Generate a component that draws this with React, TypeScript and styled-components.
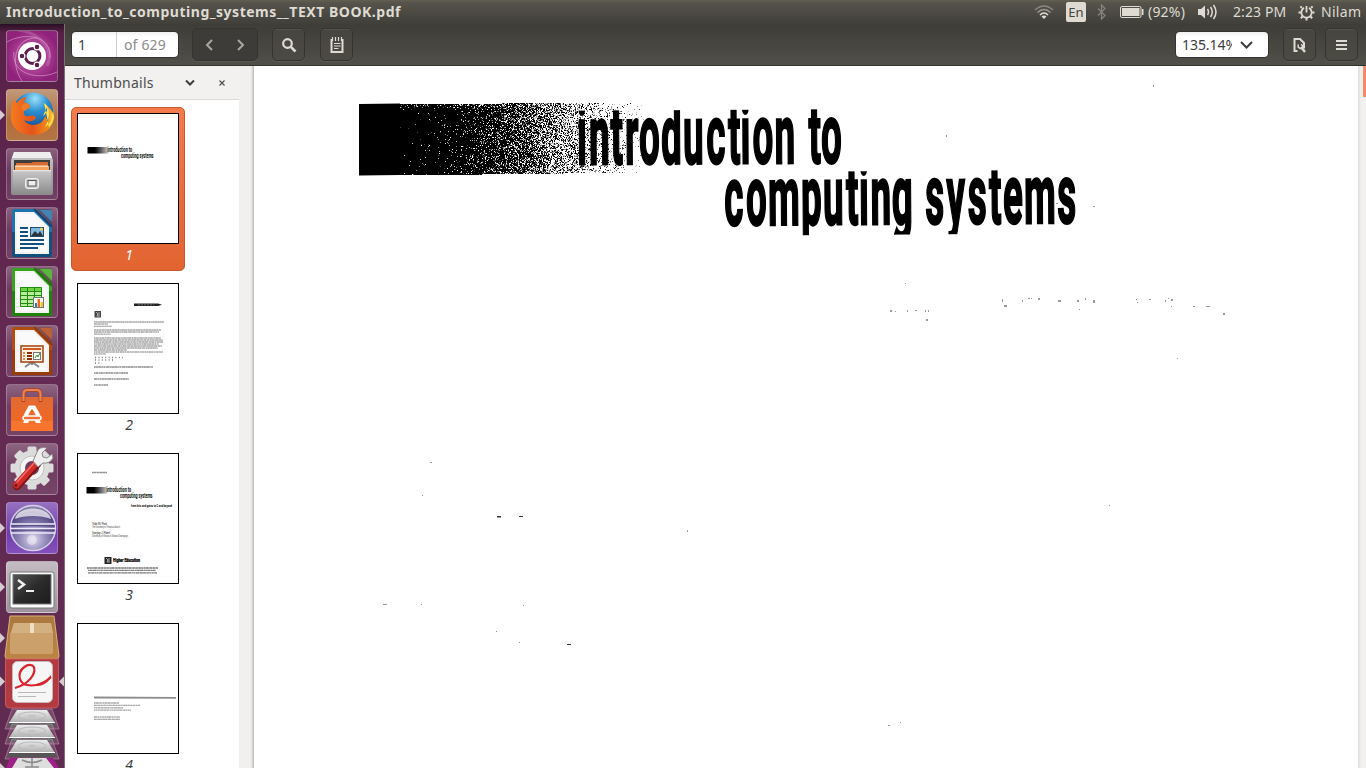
import React from "react";
import styled, { createGlobalStyle, css } from "styled-components";

const GlobalStyle = createGlobalStyle`
  * { box-sizing: border-box; }
  body {
    margin: 0;
    overflow: hidden;
    font-family: "Noto Sans", "Open Sans", sans-serif;
    background: #fff;
  }
  svg { display: block; flex: none; }
`;

/* ---------- Layout ---------- */

const Screen = styled.div`
  width: 1366px;
  height: 768px;
  display: flex;
  flex-direction: column;
  overflow: hidden;
`;

const MenuBar = styled.header`
  height: 24px;
  flex: none;
  display: flex;
  align-items: center;
  justify-content: space-between;
  padding-left: 6px;
  background: linear-gradient(#625f52 0, #55534b 3px, #403f3a 100%);
  color: #dfdbd2;
`;

const WindowTitle = styled.h1`
  margin: 0;
  font-size: 14px;
  line-height: 24px;
  font-weight: 700;
  letter-spacing: 0.52px;
  white-space: nowrap;
`;

const Indicators = styled.div`
  width: 332px;
  height: 24px;
  display: flex;
  align-items: center;
`;

const Indicator = styled.div<{ $w: number; $gap?: number; $ls?: number }>`
  width: ${(p) => p.$w}px;
  margin-right: ${(p) => p.$gap ?? 0}px;
  flex: none;
  font-size: 14px;
  line-height: 24px;
  letter-spacing: ${(p) => p.$ls ?? 0}px;
  white-space: nowrap;
`;

const KeyboardBadge = styled.div`
  width: 20px;
  height: 20px;
  margin-right: 11px;
  border-radius: 2px;
  background: #dfdbd2;
  color: #45443f;
  font-size: 13px;
  line-height: 21px;
  text-align: center;
`;

const Workspace = styled.div`
  flex: 1;
  min-height: 0;
  display: flex;
`;

const Launcher = styled.nav`
  width: 65px;
  flex: none;
  overflow: hidden;
  display: flex;
  flex-direction: column;
  padding-top: 6px;
  border-right: 1px solid #7f6d78;
  background: linear-gradient(#2b0f24 0, #592149 9px, #642a53 45%, #602b50 100%);
`;

const Slot = styled.div<{ $running?: boolean }>`
  height: 52px;
  margin-bottom: 7px;
  flex: none;
  display: flex;
  align-items: center;
  &::before {
    content: "";
    width: 0;
    margin-right: ${(p) => (p.$running ? 1 : 6)}px;
    border: ${(p) => (p.$running ? "5px solid transparent" : "0")};
    border-left-color: #d5cdd2;
    border-right-width: 0;
  }
`;

const Tile = styled.div<{ $bg?: string }>`
  width: 52px;
  height: 52px;
  border-radius: 4px;
  overflow: hidden;
  border: 1px solid rgba(255, 255, 255, 0.24);
  background: ${(p) =>
    p.$bg ?? "linear-gradient(rgba(255,255,255,.28), rgba(255,255,255,.09) 45%, rgba(255,255,255,.12))"};
  svg { margin: -1px; }
`;

const AppWindow = styled.main`
  flex: 1;
  min-width: 0;
  display: flex;
  flex-direction: column;
`;

const Toolbar = styled.div`
  height: 42px;
  flex: none;
  display: flex;
  align-items: center;
  padding: 0 8px 0 7px;
  border-bottom: 1px solid #34332f;
  background: linear-gradient(#3e3d38, #504f48);
`;

const fieldSkin = css`
  border-radius: 4px;
  background: linear-gradient(#f1f1f1, #fff 5px);
  box-shadow: 0 0 0 1px #34332f;
  color: #3c3c3c;
  font-size: 14px;
`;

const PageField = styled.div`
  ${fieldSkin}
  width: 106px;
  height: 25px;
  display: flex;
  line-height: 25px;
`;

const PageNumber = styled.span`
  width: 45px;
  padding-left: 6px;
  border-right: 1px solid #cfcdca;
`;

const PageTotal = styled.span`
  padding-left: 7px;
  color: #8b8b8b;
  letter-spacing: 0.15px;
  white-space: nowrap;
`;

const ZoomField = styled.div`
  ${fieldSkin}
  width: 92px;
  height: 25px;
  margin-left: auto;
  display: flex;
  align-items: center;
`;

const ZoomText = styled.span`
  width: 50px;
  margin: 0 8px 0 6px;
  overflow: hidden;
  flex: none;
  line-height: 25px;
  letter-spacing: -0.05px;
`;

const ToolButton = styled.button<{ $ml: number; $w?: number }>`
  width: ${(p) => p.$w ?? 33}px;
  height: 33px;
  margin: 0 0 0 ${(p) => p.$ml}px;
  padding: 0;
  flex: none;
  display: flex;
  align-items: center;
  justify-content: center;
  gap: 22px;
  border: 1px solid #35342f;
  border-radius: 5px;
  background: ${(p) => (p.$w ? "#3d3c38" : "linear-gradient(#46453f, #4b4a43)")};
  box-shadow: 0 1px 0 #5b5a52, inset 0 1px 0 ${(p) => (p.$w ? "#3d3c38" : "#55544c")};
`;

const Content = styled.div`
  flex: 1;
  min-height: 0;
  display: flex;
`;

const Sidebar = styled.aside`
  width: 174px;
  flex: none;
  display: flex;
  flex-direction: column;
  background: #fff;
`;

const SidebarHeader = styled.div`
  height: 34px;
  flex: none;
  display: flex;
  align-items: center;
  padding-left: 9px;
  border-bottom: 1px solid #dcdad8;
  background: #f2f1f0;
  color: #4c4c4c;
  font-size: 14px;
`;

const SidebarTitle = styled.span`
  width: 111px;
  letter-spacing: 0.25px;
`;

const CloseSlot = styled.span`
  margin-left: 24px;
`;

const ThumbList = styled.div`
  flex: 1;
  min-height: 0;
  overflow: hidden;
  padding: 7px 0 0 6px;
  display: flex;
  flex-direction: column;
  gap: 6px;
`;

const Thumb = styled.figure<{ $selected?: boolean }>`
  width: 114px;
  height: 164px;
  margin: 0;
  padding: 5px;
  flex: none;
  border-radius: 5px;
  border: 1px solid ${(p) => (p.$selected ? "#c9562c" : "transparent")};
  background: ${(p) => (p.$selected ? "linear-gradient(#f37b4c, #e8693a 70%, #e26531)" : "none")};
  color: ${(p) => (p.$selected ? "#fff" : "#3c3c3c")};
`;

const Sheet = styled.div`
  width: 102px;
  height: 131px;
  border: 1px solid #000;
  background: #fff;
`;

const ThumbLabel = styled.figcaption`
  padding-left: 2px;
  font-size: 14px;
  font-style: italic;
  line-height: 22px;
  text-align: center;
`;

const Splitter = styled.div`
  width: 15px;
  flex: none;
  background: linear-gradient(90deg, #f1f0ef 11px, #e3e2e1 13px, #b5b4b3 15px);
`;

const Viewer = styled.section`
  width: 1104px;
  flex: none;
`;

const Scrollbar = styled.div`
  flex: 1;
  padding-left: 5px;
  background: linear-gradient(90deg, #dedddc, #f1f0ef 3px);
`;

const ScrollThumb = styled.div`
  height: 31px;
  background: #f48d66;
`;

/* ---------- Scanned page artwork ---------- */

function seeded(seed: number) {
  let s = seed;
  return () => {
    s = (s + 0x6d2b79f5) | 0;
    let t = Math.imul(s ^ (s >>> 15), 1 | s);
    t = (t + Math.imul(t ^ (t >>> 7), 61 | t)) ^ t;
    return ((t ^ (t >>> 14)) >>> 0) / 4294967296;
  };
}

const STOPS: [number, number][] = [
  [359, 1], [400, 0.999], [425, 0.985], [460, 0.95], [490, 0.87], [515, 0.76],
  [540, 0.6], [565, 0.42], [590, 0.26], [610, 0.14], [630, 0.05], [645, 0],
];

function density(x: number) {
  for (let i = 1; i < STOPS.length; i++) {
    const [x1, d1] = STOPS[i];
    const [x0, d0] = STOPS[i - 1];
    if (x <= x1) return d0 + ((d1 - d0) * (x - x0)) / (x1 - x0);
  }
  return 0;
}

function buildGrain() {
  const rnd = seeded(77);
  const layers = ["", "", "", ""];
  for (let y = 102; y < 176; y++) {
    for (let x = 400; x < 645; x++) {
      const r = rnd();
      const t = (x - 359) / 286;
      const top = 104 - 2 * t;
      const bottom = 175.5 - 3.5 * t;
      if (y < top || y > bottom) continue;
      const d = density(x) * (y < top + 4 ? 0.92 : 1);
      const black = Math.pow(d, 1.7);
      const white = Math.pow(1 - d, 1.5);
      if (r > 1 - white) continue;
      const gray = r <= black ? 0 : 1 + Math.min(2, Math.floor(((r - black) / (1 - white - black)) * 3));
      layers[gray] += `M${x} ${y}h1v1h-1z`;
    }
  }
  return layers;
}

const GRAIN = buildGrain();
const GRAIN_FILLS = ["#000", "#444", "#888", "#c4c4c4"];

const LINE_1 = [582, 599.5, 617, 632, 649.5, 671.5, 693.5, 716, 734.5, 745.5, 763, 785, 797, 815, 831.5];
const LINE_2 = [734, 756.5, 784, 811.5, 833.5, 852.5, 864, 881, 902.5, 918, 935, 956, 977.5, 995.5, 1013, 1040, 1067];
const SQUEEZE = 0.44;

const squeezed = (xs: number[]) => xs.map((x) => (x / SQUEEZE).toFixed(1)).join(" ");

// x, y, width, height of the scanner specks
const SPECKS = [
  [1153, 85, 1, 2], [946, 135, 1, 2], [1093, 206, 2, 1], [1056, 203, 2, 1], [905, 283, 1, 1],
  [1002, 299, 1, 3], [1004, 305, 3, 2], [1022, 300, 1, 2], [1028, 298, 2, 1], [1031, 298, 1, 1],
  [1038, 298, 2, 2], [1058, 300, 3, 2], [1077, 300, 2, 2], [1085, 298, 1, 2], [1093, 300, 2, 3],
  [1079, 309, 1, 1], [1136, 299, 1, 1], [1137, 302, 1, 1], [1149, 299, 2, 1], [1165, 300, 1, 2],
  [1168, 298, 1, 1], [1171, 299, 2, 2], [1171, 306, 1, 1], [1193, 306, 2, 1], [1206, 306, 4, 1],
  [1223, 313, 2, 2], [890, 310, 2, 2], [895, 311, 1, 1], [907, 310, 1, 2], [915, 310, 2, 1],
  [925, 310, 1, 2], [928, 310, 1, 2], [926, 319, 2, 2], [1177, 358, 1, 1], [430, 462, 2, 1],
  [422, 495, 1, 1], [1109, 505, 1, 1], [687, 530, 1, 2], [383, 604, 4, 1], [421, 604, 1, 1],
  [523, 605, 1, 1], [496, 631, 1, 1], [519, 642, 1, 1], [888, 725, 2, 1], [900, 722, 1, 1],
];

function DocumentPage() {
  return (
    <svg width="1104" height="702" viewBox="254 66 1104 702">
      <defs>
        <clipPath id="line1"><rect x="560" y="110" width="300" height="62" /></clipPath>
        <clipPath id="line2"><rect x="700" y="171" width="400" height="63.5" /></clipPath>
      </defs>
      <path d="M359 104L400 103.6V175L359 175.5z" />
      <g shapeRendering="crispEdges">
        {GRAIN.map((d, i) => (
          <path key={i} d={d} fill={GRAIN_FILLS[i]} />
        ))}
      </g>
      <g fontFamily="Roboto, sans-serif" fontWeight="700" fontSize="83" textAnchor="middle" stroke="#000" strokeWidth="2.4">
        <g transform="rotate(-0.3 710 164)">
          <g clipPath="url(#line1)">
            <text transform={`translate(0 163.5) scale(${SQUEEZE} 1)`} x={squeezed(LINE_1)}>introduction to</text>
          </g>
        </g>
        <g transform="rotate(-0.4 900 224)">
          <g clipPath="url(#line2)">
            <text transform={`translate(0 224) scale(${SQUEEZE} 1)`} x={squeezed(LINE_2)}>computing systems</text>
          </g>
        </g>
      </g>
      <g fill="#999">
        {SPECKS.map(([x, y, w, h]) => (
          <rect key={`${x}-${y}`} x={x} y={y} width={w} height={h} />
        ))}
      </g>
      <path d="M497 516h4v1.500h-4zM519 516h4v1h-4zM567 644h4v1h-4z" fill="#333" />
    </svg>
  );
}

/* ---------- Thumbnails ---------- */

function MiniTitle({ x, y }: { x: number; y: number }) {
  return (
    <g transform={`translate(${x} ${y})`}>
      <rect width="21" height="6.5" fill="url(#miniFade)" />
      <g fontFamily="Roboto, sans-serif" fontWeight="700" fontSize="7.4">
        <text transform="translate(20 5.4) scale(.5 1)" textLength="49" lengthAdjust="spacingAndGlyphs">introduction to</text>
        <text transform="translate(33.5 10.900) scale(.5 1)" textLength="65" lengthAdjust="spacingAndGlyphs">computing systems</text>
      </g>
    </g>
  );
}

const dash = (seed: number) => {
  const rnd = seeded(Math.round(seed * 991));
  return Array.from({ length: 12 }, (_, i) => (i % 2 ? 0.5 + rnd() * 0.7 : 0.8 + rnd() * 2.2).toFixed(1)).join(" ");
};

function Rows({ rows, color = "#777" }: { rows: number[][]; color?: string }) {
  return (
    <g stroke={color} strokeWidth="1.3">
      {rows.map(([x, y, w], i) => (
        <React.Fragment key={i}>
          <path d={`M${x} ${y}h${w}`} strokeOpacity=".35" />
          <path d={`M${x} ${y}h${w}`} strokeOpacity=".45" strokeDasharray={dash(i + y)} />
        </React.Fragment>
      ))}
    </g>
  );
}

const Mini = ({ children }: { children: React.ReactNode }) => (
  <svg width="100" height="129" viewBox="0 0 100 129">
    <defs>
      <linearGradient id="miniFade">
        <stop offset=".35" stopColor="#000" />
        <stop offset="1" stopColor="#000" stopOpacity=".2" />
      </linearGradient>
    </defs>
    {children}
  </svg>
);

const PageOne = () => (
  <Mini><MiniTitle x={9.5} y={33} /></Mini>
);

const PageTwo = () => (
  <Mini>
    <path d="M56 19.500h24l4 1.300-4 1.300H56z" fill="#222" />
    <path d="M60 20.800h16" stroke="#888" strokeWidth=".7" strokeDasharray="2 1" />
    <rect x="16.500" y="27" width="6.500" height="6.500" fill="#444" />
    <path d="M18 28l2 2-1 2h3M21 28v3" stroke="#ccc" fill="none" strokeWidth=".8" />
    <Rows
      rows={[
        [16, 38, 70], [16, 40, 14], [16, 42.3, 18],
        [16, 46, 67], [16, 48, 65], [16, 50.2, 17],
        [16, 54, 67], [16, 56, 69], [16, 58, 69], [16, 60, 65], [16, 62, 68], [16, 64, 64], [16, 66, 33], [16, 68, 69], [16, 70, 12],
      ]}
    />
    <path d="M17 73.500h28M17 76h20M17 79h7" stroke="#777" strokeWidth="1.300" strokeDasharray="1 2.400" />
    <Rows rows={[[16, 83, 59], [16, 89, 34], [16, 95, 35], [16, 101, 14]]} color="#555" />
  </Mini>
);

const PageThree = () => (
  <Mini>
    <Rows rows={[[14, 18.5, 15]]} color="#555" />
    <MiniTitle x={8.5} y={33} />
    <g fontFamily="Roboto, sans-serif">
      <text x="53" y="53" fontSize="4" fontWeight="700" textLength="41" lengthAdjust="spacingAndGlyphs">from bits and gates to C and beyond</text>
      <g fill="#444">
        <text x="14" y="70.500" fontSize="3.600" textLength="15">Yale N. Patt</text>
        <text x="14" y="73.500" fontSize="2.600" textLength="28" lengthAdjust="spacingAndGlyphs">The University of Texas at Austin</text>
        <text x="14" y="80" fontSize="3.600" textLength="18">Sanjay J. Patel</text>
        <text x="14" y="83" fontSize="2.600" textLength="36" lengthAdjust="spacingAndGlyphs">University of Illinois at Urbana-Champaign</text>
      </g>
      <rect x="26.500" y="103" width="7" height="7" fill="#222" />
      <path d="M28 104l2 2-1 2h3M31 104v3" stroke="#ddd" fill="none" strokeWidth=".8" />
      <text x="35" y="108" fontSize="4.600" fontWeight="900" stroke="#000" strokeWidth=".2" textLength="27" lengthAdjust="spacingAndGlyphs">Higher Education</text>
    </g>
    <Rows rows={[[9, 114, 71], [10, 116.4, 68], [10, 118.8, 69]]} color="#333" />
  </Mini>
);

const PageFour = () => (
  <Mini>
    <path d="M16 73.500l82 .3" stroke="#8d8d8d" strokeWidth="1.800" />
    <Rows rows={[[16, 79, 25], [16, 81.3, 46], [16, 83.8, 29], [16, 86.2, 37], [16, 93, 26], [16, 95.3, 26]]} />
  </Mini>
);

/* ---------- Launcher icons ---------- */

const Icon52 = ({ children, h = 52 }: { children: React.ReactNode; h?: number }) => (
  <svg width="52" height={h} viewBox={`0 0 52 ${h}`}>{children}</svg>
);

const DashIcon = () => (
  <Icon52>
    <defs>
      <radialGradient id="dashBg"><stop offset=".2" stopColor="#c25aa8" /><stop offset="1" stopColor="#90227b" /></radialGradient>
    </defs>
    <rect width="52" height="52" fill="url(#dashBg)" />
    <g fill="none" stroke="#e5b5da" strokeOpacity=".55">
      <path d="M1 12C18 2 46 5 44 28M51 42C35 50 5 46 8 22M16 51C3 31 10 7 31 8" />
      <path d="M12 0C30 2 50 17 41 36" strokeOpacity=".25" strokeWidth="3" />
    </g>
    <circle cx="26" cy="26" r="14" fill="#fff" />
    <circle cx="26.5" cy="26" r="7.400" fill="none" stroke="#5d1e4d" strokeWidth="3" />
    <g fill="#5d1e4d" stroke="#fff" strokeWidth="1.200">
      <circle cx="16" cy="26" r="2.900" /><circle cx="31" cy="17" r="2.900" /><circle cx="31" cy="35" r="2.900" />
    </g>
  </Icon52>
);

const FirefoxIcon = () => (
  <Icon52>
    <defs>
      <radialGradient id="globe" cx=".55" cy=".15" r=".8"><stop stopColor="#9be0fa" /><stop offset=".4" stopColor="#2c8fd0" /><stop offset="1" stopColor="#143f87" /></radialGradient>
      <linearGradient id="fox" x1="0" x2="1"><stop stopColor="#f47b20" /><stop offset=".5" stopColor="#e5531b" /><stop offset=".85" stopColor="#f08a1d" /><stop offset="1" stopColor="#fce34a" /></linearGradient>
    </defs>
    <circle cx="27" cy="24" r="20.500" fill="url(#globe)" />
    <path d="M7 10L11 14C13 11 17 8 21 8C19 10 18 12 19 14C23 14 25 17 23 19L18 22C17 26 20 28 23 27C26 26 29 26 30 29C27 34 21 32 18 31C23 39 37 37 39 27C41 30 42 32 41 34C44 28 42 20 38 15C45 18 48 25 48 29C46 40 37 47 26 46C12 46 3 37 5 23C5 18 7 14 7 10Z" fill="url(#fox)" />
    <path d="M38 14C46 19 43 32 39 38C46 34 49 25 46 15C48 21 49 32 43 38M37 27C40 25 42 21 41 18" fill="#ffe44f" />
    <path d="M19 14C23 14 25 17 23 19L18 22C14 21 14 16 19 14Z" fill="#ef7d26" />
  </Icon52>
);

const FilesIcon = () => (
  <Icon52>
    <defs>
      <linearGradient id="cab" x2="0" y2="1"><stop stopColor="#c9c9c9" /><stop offset="1" stopColor="#8c8c8c" /></linearGradient>
    </defs>
    <path d="M8 4h36l3 8v33q0 2-2 2H7q-2 0-2-2V12z" fill="url(#cab)" />
    <path d="M8 4h36l2 6H6z" fill="#eee" />
    <path d="M8 12h36v12H8z" fill="#3f3e3e" />
    <path d="M10 15h15l2-1h15v9H10z" fill="#d66c2f" />
    <path d="M9 18h34v5H9z" fill="#f7a35c" /><path d="M9 17.500h33v1.300H9z" fill="#fde6c8" />
    <path d="M7 22h38v24H7z" fill="url(#cab)" /><path d="M7 22h38v1.300H7z" fill="#e6e6e6" />
    <rect x="19.500" y="30.500" width="13" height="10" rx="2" fill="#ccc" stroke="#eee" />
    <rect x="22" y="32.500" width="8" height="5.500" fill="#eee" stroke="#555" />
  </Icon52>
);

function OfficeIcon({ dark, mid, light, children }: { dark: string; mid: string; light: string; children: React.ReactNode }) {
  return (
    <Icon52>
      <path d="M8 2h21l17 17v29q0 2-2 2H8q-2 0-2-2V4q0-2 2-2z" fill={mid} />
      <path d="M6 25h40v23q0 2-2 2H8q-2 0-2-2z" fill={dark} fillOpacity=".65" />
      <path d="M29 2h15q2 0 2 2v15z" fill={dark} fillOpacity=".35" />
      <path d="M28 2l18 18" stroke={dark} strokeWidth="1.500" />
      <path d="M34 3h10q2 0 2 2v10z" fill={light} fillOpacity=".85" />
      <path d="M9 5h19l15 15v27H9z" fill="#f3f3f3" />
      <path d="M11 7h16l14 15v23H11z" fill="#fff" fillOpacity=".6" />
      {children}
    </Icon52>
  );
}

const WriterIcon = () => (
  <OfficeIcon dark="#0b3c63" mid="#1d74ad" light="#3f8dbd">
    <path d="M14 21h8M14 25h8M14 29h8M14 33h24M14 37h24M14 41h18" stroke="#10517f" strokeWidth="2" />
    <rect x="24.500" y="20.500" width="13" height="9" fill="#7fb9df" stroke="#1d4c75" />
    <path d="M25 29l4-5 3 3 2-3 3 5z" fill="#2b3439" /><circle cx="35.500" cy="22" r="1.500" fill="#f3d14d" />
  </OfficeIcon>
);

const CalcIcon = () => (
  <OfficeIcon dark="#137000" mid="#36a51c" light="#5bc33c">
    <rect x="14" y="21" width="22" height="20" fill="#b9ed9d" />
    <path d="M14 21h22v4H14z" fill="#6fd244" />
    <path d="M14.500 21.500h21v19h-21zM14 25.500h22M14 29.500h22M14 33.500h22M14 37.500h22M21.500 21v20M28.500 21v20" fill="none" stroke="#218a10" />
    <rect x="27.500" y="31.500" width="10" height="10" fill="#fff" stroke="#777" />
    <path d="M29 37h2v4h-2z" fill="#2f7fc2" /><path d="M31.500 33h2.500v8h-2.500z" fill="#ee6b22" /><path d="M34.500 36h2.500v5h-2.500z" fill="#f0c52e" />
  </OfficeIcon>
);

const ImpressIcon = () => (
  <OfficeIcon dark="#8a3604" mid="#b04d10" light="#c26632">
    <path d="M19 42l7-5 7 5M26 36v4" fill="none" stroke="#888" strokeWidth="2" />
    <rect x="15" y="21" width="22" height="16" fill="#fff1e4" stroke="#a23f0c" strokeWidth="1.500" />
    <path d="M17 24h18" stroke="#d35a1c" strokeWidth="2" />
    <path d="M17 28h2M17 31h2M17 34h2" stroke="#e58a57" strokeWidth="2" />
    <path d="M21 28h5M21 31h5M21 34h5" stroke="#8b3207" strokeWidth="2" />
    <rect x="27.500" y="27.500" width="7" height="7" fill="#fff" stroke="#777" />
    <path d="M29 33l2-3 1 2 2-4" fill="none" stroke="#2c9428" />
  </OfficeIcon>
);

const SoftwareIcon = () => (
  <Icon52>
    <defs><linearGradient id="bag" x2="0" y2="1"><stop stopColor="#e06a34" /><stop offset="1" stopColor="#f7671d" /></linearGradient></defs>
    <path d="M5 13h42v34H5z" fill="url(#bag)" />
    <path d="M5 37h42v10H5z" fill="#ff8c4b" fillOpacity=".35" />
    <path d="M17.500 18V10q0-4 4-4h9q4 0 4 4v8" fill="none" stroke="#b34218" strokeWidth="3.600" />
    <path d="M17.500 17V10q0-4 4-4h9q4 0 4 4v7" fill="none" stroke="#ea8454" strokeWidth="2.200" />
    <path d="M19.500 32L24 23.500h4L32.500 32" fill="none" stroke="#fff" strokeWidth="4" />
    <path d="M17 39l1.500-3h5L22 39zM35 39l-1.500-3h-5l1.500 3z" fill="#fff" />
    <rect x="17" y="32" width="18" height="4" rx="2" fill="#ee7137" stroke="#fff" strokeWidth="1.500" />
  </Icon52>
);

const SettingsIcon = () => (
  <Icon52>
    <g fill="#dcdcdc">
      {[0, 45, 90, 135].map((a) => (
        <rect key={a} x="21.500" y="3.500" width="9" height="43" rx="1.500" transform={`rotate(${a} 26 25)`} />
      ))}
      <circle cx="26" cy="25" r="17.500" />
    </g>
    <circle cx="26" cy="25" r="12" fill="#f4f4f4" stroke="#c1c1c1" />
    <circle cx="26" cy="25" r="7" fill="#6a3f60" />
    <path d="M11 43L31 21" stroke="#811512" strokeWidth="8.500" strokeLinecap="round" />
    <path d="M10.500 42L30 20" stroke="#d12b2b" strokeWidth="6.500" strokeLinecap="round" />
    <path d="M11 39L29 19" stroke="#ef7067" strokeWidth="1.500" strokeLinecap="round" />
    <circle cx="10" cy="42.500" r="1.400" fill="#6a1a1a" />
    <path d="M27 18l5 6 5-4q7 1 10-5l-1-4-5 4-4-1-1-4 5-5q-8-2-10 4z" fill="#eee" stroke="#888" />
  </Icon52>
);

const EclipseIcon = () => (
  <Icon52>
    <defs><radialGradient id="orb" cx=".5" cy=".75" r=".8"><stop stopColor="#dcd8ec" /><stop offset=".35" stopColor="#968dbd" /><stop offset=".75" stopColor="#554883" /><stop offset="1" stopColor="#b9b3cf" /></radialGradient></defs>
    <circle cx="27" cy="26" r="22.500" fill="url(#orb)" stroke="#d4cfe6" strokeWidth="1.500" />
    <path d="M9 17C12 3 42 3 45 17C35 13 18 13 9 17z" fill="#fff" fillOpacity=".7" />
    <path d="M5 22h44M4.500 26.500h45M5 31h44" stroke="#eeeaf8" strokeWidth="1.500" />
    <path d="M5 23.700h44M5 28.200h44" stroke="#52447e" strokeWidth="1" />
    <circle cx="26" cy="38" r="5" fill="#fff" fillOpacity=".4" />
  </Icon52>
);

const TerminalIcon = () => (
  <Icon52>
    <defs><linearGradient id="term" x2="1" y2="1"><stop stopColor="#555" /><stop offset=".5" stopColor="#2b2b2b" /><stop offset="1" stopColor="#1c1c1c" /></linearGradient></defs>
    <rect x="4" y="11" width="44" height="36" rx="2" fill="#fafafa" stroke="#777" />
    <rect x="7" y="13.500" width="38" height="29.500" fill="url(#term)" stroke="#777" />
    <path d="M12 19l6 4.500-6 4.500" fill="none" stroke="#eee" strokeWidth="2.500" />
    <path d="M20 30h8" stroke="#eee" strokeWidth="2" />
  </Icon52>
);

const FoldedStack = styled.div`
  display: flex;
  flex-direction: column;
  flex: none;
  margin-top: -12px;
`;

function FoldedIcons() {
  return (
    <FoldedStack>
      <svg width="64" height="160" viewBox="0 608 64 160">
        <defs>
          <linearGradient id="box" x2="0" y2="1"><stop stopColor="#aa773e" /><stop offset="1" stopColor="#bd8544" /></linearGradient>
          <linearGradient id="disk" x2="0" y2="1"><stop stopColor="#ececec" /><stop offset="1" stopColor="#9b9b9b" /></linearGradient>
        </defs>
        <path d="M10 616h44l5 40q0 3-3 3H8q-3 0-3-3z" fill="url(#box)" stroke="#d9b178" />
        <path d="M14 623h37l2 12v17H10v-17z" fill="#c39a66" />
        <path d="M10 633h43v19q0 2-2 2H12q-2 0-2-2z" fill="#cba06a" />
        <path d="M14 623h37l2 10H11z" fill="#d4b080" />
        <path d="M30 623h4v10h-4z" fill="#eedfc4" />

        <path d="M5.500 659h53v45q0 4-4 4h-45q-4 0-4-4z" fill="#b23a40" stroke="#c8585b" />
        <rect x="12.500" y="661.500" width="40" height="41" rx="5" fill="#f6f6f6" stroke="#c7b9b9" />
        <path d="M15 688C29 684 36 674 34 667C30 661 17 669 20 679C22 687 38 689 51 677" fill="none" stroke="#d9232e" strokeWidth="2.200" />
        <path d="M37 684Q45 683 51 675v3Q44 687 36 686z" fill="#d9232e" />
        <path d="M18 692.500h28M18 696.500h18" stroke="#b9b9b9" />

        {[708, 723, 738].map((y) => (
          <g key={y}>
            <path d={`M12 ${y + 1}h40l7 20H5z`} fill="#fff" fillOpacity=".14" stroke="#b795aa" strokeOpacity=".6" />
            <path d={`M17 ${y + 2}h30l8 13v4H9v-4z`} fill="url(#disk)" />
            <path d={`M9 ${y + 15}h46v4H9z`} fill="#555" />
            <path d={`M9 ${y + 14.500}h46`} stroke="#fff" />
            <ellipse cx="32" cy={y + 8} rx="14" ry="4" fill="none" stroke="#bababa" />
            <ellipse cx="32" cy={y + 8} rx="4" ry="1.500" fill="#c4c4c4" />
          </g>
        ))}
        <path d="M10 758h43l6 10H6z" fill="#a01f88" />
        <path d="M18 758h28l8 10H12z" fill="#dedede" />
        <path d="M32 758v9M22 760q10 5 20 0M25 767h14" fill="none" stroke="#8b8b8b" strokeWidth="1.500" />
        <g fill="#d5cdd2">
          <path d="M0 633l5 5-5 5zM0 676.500l5 5-5 5zM64 676.500l-5 5 5 5zM0 763l5 5H0z" />
        </g>
      </svg>
    </FoldedStack>
  );
}

const LAUNCHER_ITEMS: { icon: React.ReactNode; running?: boolean; bg?: string }[] = [
  { icon: <DashIcon /> },
  { icon: <FirefoxIcon />, running: true, bg: "linear-gradient(#c0997c, #ad6d3e 60%, #b57543)" },
  { icon: <FilesIcon /> },
  { icon: <WriterIcon /> },
  { icon: <CalcIcon /> },
  { icon: <ImpressIcon /> },
  { icon: <SoftwareIcon /> },
  { icon: <SettingsIcon /> },
  { icon: <EclipseIcon />, running: true, bg: "linear-gradient(#9670c0, #713dac 60%, #8350bb)" },
  { icon: <TerminalIcon />, running: true, bg: "linear-gradient(#c5bcc3, #9e939d)" },
];

/* ---------- Panel and toolbar icons ---------- */

const LIGHT = "#dfdbd2";

const WifiIcon = () => (
  <svg width="20" height="16" viewBox="0 0 20 16" fill="none" strokeWidth="1.600">
    <path d="M1 6Q10-2 19 6" stroke="#8b887f" /><path d="M3.500 8.500Q10 2.500 16.500 8.500" stroke="#9b978e" />
    <path d="M6 11Q10 7 14 11" stroke={LIGHT} /><path d="M7.500 12.500Q10 10.500 12.500 12.500L10 15z" fill={LIGHT} />
  </svg>
);
const BluetoothIcon = () => (
  <svg width="10" height="16" viewBox="0 0 10 16" fill="none" stroke="#85827a" strokeWidth="1.300">
    <path d="M1 4.500l7 7-3.500 3.500V1L8 4.500l-7 7" />
  </svg>
);
const BatteryIcon = () => (
  <svg width="24" height="12" viewBox="0 0 24 12">
    <rect x=".5" y=".5" width="20.500" height="11" rx="1.500" fill="none" stroke={LIGHT} />
    <rect x="2" y="2" width="17.500" height="8" fill={LIGHT} /><path d="M22 3h1.500v6H22z" fill={LIGHT} />
  </svg>
);
const SpeakerIcon = () => (
  <svg width="21" height="16" viewBox="0 0 21 16" fill="none" stroke={LIGHT} strokeWidth="1.500">
    <path d="M1 5h3l4-3.500v13L4 11H1z" fill={LIGHT} stroke="none" />
    <path d="M10.500 5q2 3 0 6M13.500 3q3.500 5 0 10M16.500 1q5 7 0 14" />
  </svg>
);
const SessionIcon = () => (
  <svg width="17" height="17" viewBox="0 0 17 17" fill="none" stroke={LIGHT}>
    <path d="M6 3.900A5.200 5.200 0 1 0 11 3.900" strokeWidth="1.800" />
    <path d="M8.500 2v6.500" strokeWidth="1.800" />
    <path d="M3.800 3.800L2.400 2.400M13.200 3.800l1.400-1.400M2.800 8.500H.5M14.200 8.500h2.300M4.500 12.500l-1.700 1.700M12.500 12.500l1.700 1.700M8.500 14v2.500" strokeWidth="2" />
  </svg>
);
const Chevron = ({ d, color = "#aaa79f", w = 10, h = 14, sw = 2 }: { d: string; color?: string; w?: number; h?: number; sw?: number }) => (
  <svg width={w} height={h} viewBox={`0 0 ${w} ${h}`} fill="none" stroke={color} strokeWidth={sw}><path d={d} /></svg>
);
const SearchIcon = () => (
  <svg width="16" height="16" viewBox="0 0 16 16" fill="none" stroke={LIGHT}>
    <circle cx="6.500" cy="6.500" r="4.300" strokeWidth="2.200" /><path d="M9.800 9.800l4.700 4.700" strokeWidth="2.600" />
  </svg>
);
const NotesIcon = () => (
  <svg width="14" height="18" viewBox="0 0 14 18" fill="none" stroke={LIGHT}>
    <path d="M1.500 3v13h11V3" strokeWidth="2" /><path d="M2.500 1v4M5.500 1v4M8.500 1v4M11.500 1v4" strokeWidth="1.200" />
    <path d="M4 7.500h6.500M4 10h6.500M4 12.500h4.500" strokeWidth="1.200" />
  </svg>
);
const DocumentToolsIcon = () => (
  <svg width="13" height="16" viewBox="0 0 13 16" fill="none" stroke={LIGHT}>
    <path d="M4.500 14H1.500V2h5.500l4 4v5.500" strokeWidth="2" />
    <path d="M8 10l4 5" strokeWidth="2.400" />
    <path d="M5.200 7.500v2.500l2 1.500h1.500l.8-1.500V8.500L8.200 7.200" strokeWidth="1.500" />
  </svg>
);
const MenuIcon = () => (
  <svg width="11" height="12" viewBox="0 0 11 12" stroke={LIGHT} strokeWidth="2"><path d="M0 2h11M0 6h11M0 10h11" /></svg>
);

/* ---------- App ---------- */

const PAGES = [PageOne, PageTwo, PageThree, PageFour];

export default function App() {
  return (
    <Screen>
      <GlobalStyle />
      <MenuBar>
        <WindowTitle>Introduction_to_computing_systems__TEXT BOOK.pdf</WindowTitle>
        <Indicators>
          <Indicator $w={20} $gap={12}><WifiIcon /></Indicator>
          <KeyboardBadge>En</KeyboardBadge>
          <Indicator $w={10} $gap={13}><BluetoothIcon /></Indicator>
          <Indicator $w={24} $gap={4}><BatteryIcon /></Indicator>
          <Indicator $w={39} $gap={10} $ls={0.2}>(92%)</Indicator>
          <Indicator $w={21} $gap={15}><SpeakerIcon /></Indicator>
          <Indicator $w={53} $gap={12} $ls={0.1}>2:23 PM</Indicator>
          <Indicator $w={17} $gap={6}><SessionIcon /></Indicator>
          <Indicator $w={40} $ls={0.3}>Nilam</Indicator>
        </Indicators>
      </MenuBar>
      <Workspace>
        <Launcher>
          {LAUNCHER_ITEMS.map((item, i) => (
            <Slot key={i} $running={item.running}>
              <Tile $bg={item.bg}>{item.icon}</Tile>
            </Slot>
          ))}
          <FoldedIcons />
        </Launcher>
        <AppWindow>
          <Toolbar>
            <PageField>
              <PageNumber>1</PageNumber>
              <PageTotal>of 629</PageTotal>
            </PageField>
            <ToolButton $ml={14} $w={66}>
              <Chevron d="M8 2L3 7l5 5" />
              <Chevron d="M2 2l5 5-5 5" />
            </ToolButton>
            <ToolButton $ml={14}><SearchIcon /></ToolButton>
            <ToolButton $ml={15}><NotesIcon /></ToolButton>
            <ZoomField>
              <ZoomText>135.14%</ZoomText>
              <Chevron d="M1 2l5.500 5.500L12 2" color="#3c3c3c" w={13} h={10} />
            </ZoomField>
            <ToolButton $ml={15}><DocumentToolsIcon /></ToolButton>
            <ToolButton $ml={9}><MenuIcon /></ToolButton>
          </Toolbar>
          <Content>
            <Sidebar>
              <SidebarHeader>
                <SidebarTitle>Thumbnails</SidebarTitle>
                <Chevron d="M1 1.500l4 4 4-4" color="#3c3c3c" w={10} h={8} />
                <CloseSlot><Chevron d="M.5 .5l5 5M5.500 .5l-5 5" color="#4c4c4c" w={6} h={6} sw={1.1} /></CloseSlot>
              </SidebarHeader>
              <ThumbList>
                {PAGES.map((Page, i) => (
                  <Thumb key={i} $selected={i === 0}>
                    <Sheet><Page /></Sheet>
                    <ThumbLabel>{i + 1}</ThumbLabel>
                  </Thumb>
                ))}
              </ThumbList>
            </Sidebar>
            <Splitter />
            <Viewer><DocumentPage /></Viewer>
            <Scrollbar><ScrollThumb /></Scrollbar>
          </Content>
        </AppWindow>
      </Workspace>
    </Screen>
  );
}
